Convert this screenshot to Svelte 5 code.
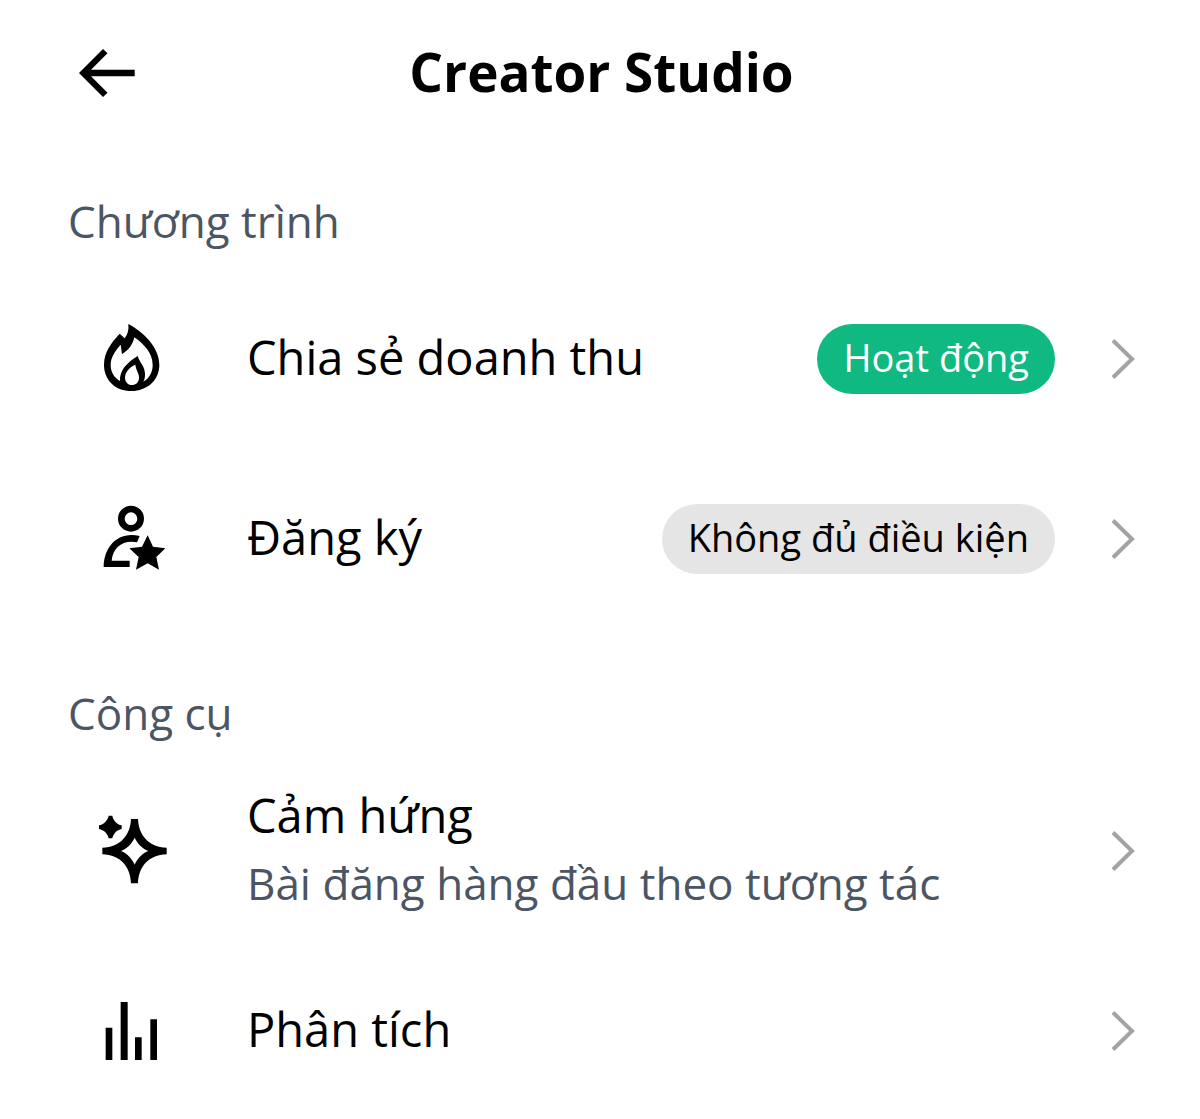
<script lang="ts">
  interface Item {
    label: string;
    icon: "flame" | "subscriber" | "sparkle" | "bars";
    hint?: string;
    status?: string;
    active?: boolean;
  }

  interface Section {
    id: string;
    title: string;
    items: Item[];
  }

  const sections: Section[] = [
    {
      id: "programs",
      title: "Chương trình",
      items: [
        { label: "Chia sẻ doanh thu", icon: "flame", status: "Hoạt động", active: true },
        { label: "Đăng ký", icon: "subscriber", status: "Không đủ điều kiện" },
      ],
    },
    {
      id: "tools",
      title: "Công cụ",
      items: [
        { label: "Cảm hứng", icon: "sparkle", hint: "Bài đăng hàng đầu theo tương tác" },
        { label: "Phân tích", icon: "bars" },
      ],
    },
  ];
</script>

<div class="page">
  <header>
    <button class="back" type="button" aria-label="Quay lại">
      <svg viewBox="0 0 56 50" width="56" height="50" aria-hidden="true">
        <path d="M0 25 24 1l4.500 4.300L12 21.700h43.700v6.600H12l16.500 16.400L24 49z" />
      </svg>
    </button>
    <h1>Creator Studio</h1>
  </header>

  <main>
    {#each sections as section (section.id)}
      <section aria-labelledby={section.id}>
        <h2 id={section.id}>{section.title}</h2>
        <nav aria-labelledby={section.id}>
          {#each section.items as item (item.label)}
            <a class="row" href="#{item.icon}">
              {#if item.icon === "flame"}
                <svg class="icon" viewBox="3 27 240 240" aria-hidden="true">
                  <path
                    fill-rule="evenodd"
                    d="M115 42C160 66 208 112 208 165C208 211 171 243 124 243C77 243 42 211 42 164C42 126 64 98 89 71L104 85C113 73 117 60 115 42ZM133 82C128 105 116 120 96 133L92 104C74 124 62 143 62 165C62 187 73 203 90 213C88 181 112 157 143 138C148 157 165 168 165 193C165 202 164 209 160 215C178 205 188 187 188 165C188 130 164 104 133 82ZM136 164C118 172 105 186 105 204C106 217 114 225 125 225C138 225 147 217 147 203C147 189 138 181 136 164Z"
                  />
                </svg>
              {:else if item.icon === "subscriber"}
                <svg class="icon" viewBox="3 27 240 240" aria-hidden="true">
                  <circle cx="123" cy="86" r="29" fill="none" stroke="currentColor" stroke-width="20" />
                  <path
                    d="M149 138L141 157C99 149 69 172 65 212H119V231H41C42 171 82 123 149 138Z"
                  />
                  <path
                    d="M173 136L189 170L226 175L199 201L207 239L173 220L138 239L146 201L118 175L156 170Z"
                  />
                </svg>
              {:else if item.icon === "sparkle"}
                <svg class="icon" viewBox="18 33 240 240" aria-hidden="true">
                  <path
                    fill-rule="evenodd"
                    d="M138 57H159C161 105 190 141 245 143V163C190 165 161 200 159 250H138C136 200 107 165 52 163V143C107 141 136 105 138 57ZM149 113C140 131 127 145 108 153C127 161 140 175 149 194C158 175 171 161 190 153C171 145 158 131 149 113Z"
                  />
                  <path d="M71 47H82C84 60 96 74 110 76V87C96 89 84 102 82 115H71C69 102 56 89 42 87V76C56 74 69 60 71 47Z" />
                </svg>
              {:else}
                <svg class="icon" viewBox="3 6 240 240" aria-hidden="true">
                  <path d="M47 116h20v97H47zM92 39h21v174H92zM135 145h20v68h-20zM181 91h20v122h-20z" />
                </svg>
              {/if}

              <span class="text">
                <span class="label">{item.label}</span>
                {#if item.hint}<span class="hint">{item.hint}</span>{/if}
              </span>

              {#if item.status}
                <span class="badge" class:active={item.active}>{item.status}</span>
              {/if}

              <svg class="chevron" viewBox="0 0 24 40" aria-hidden="true">
                <path d="M2 1.500 21 20 2 38.500" />
              </svg>
            </a>
          {/each}
        </nav>
      </section>
    {/each}
  </main>
</div>

<style>
  :global(body) {
    margin: 0;
    background: #fff;
  }
  .page {
    font-family: "Open Sans", "Noto Sans", sans-serif;
    color: #000;
  }
  header {
    display: grid;
    grid-template-columns: 56px 1fr 56px;
    align-items: center;
    height: 146px;
    padding: 0 76px 0 79px;
  }
  h1 {
    grid-column: 2;
    margin: 0;
    padding-bottom: 2px;
    font-size: 53px;
    font-weight: 700;
    line-height: 72px;
    text-align: center;
  }
  .back {
    display: flex;
    padding: 0;
    border: 0;
    background: none;
    color: inherit;
    cursor: pointer;
  }
  svg {
    display: block;
    fill: currentColor;
  }
  main {
    display: flex;
    flex-direction: column;
    gap: 74px;
    padding: 45px 65px 0 68px;
  }
  h2 {
    margin: 0 0 38px;
    color: #4b5563;
    font-size: 44px;
    font-weight: 400;
    line-height: 60px;
  }
  nav {
    display: flex;
    flex-direction: column;
    gap: 40px;
  }
  .row {
    display: flex;
    align-items: center;
    min-height: 140px;
    padding-left: 23px;
    color: inherit;
    text-decoration: none;
  }
  .icon {
    flex: none;
    width: 80px;
    height: 80px;
    margin-right: 76px;
  }
  .text {
    display: flex;
    flex: 1;
    flex-direction: column;
    padding-bottom: 4px;
    font-size: 47px;
    line-height: 68px;
  }
  .hint {
    color: #4b5563;
    font-size: 44px;
  }
  .badge {
    padding: 0 26px 4px;
    border-radius: 35px;
    background: #e5e5e5;
    font-size: 38px;
    line-height: 66px;
    white-space: nowrap;
  }
  .badge.active {
    background: #10b981;
    color: #fff;
  }
  .chevron {
    flex: none;
    width: 24px;
    height: 40px;
    margin-left: 56px;
    fill: none;
    stroke: #a3a3a3;
    stroke-width: 4px;
  }
</style>
